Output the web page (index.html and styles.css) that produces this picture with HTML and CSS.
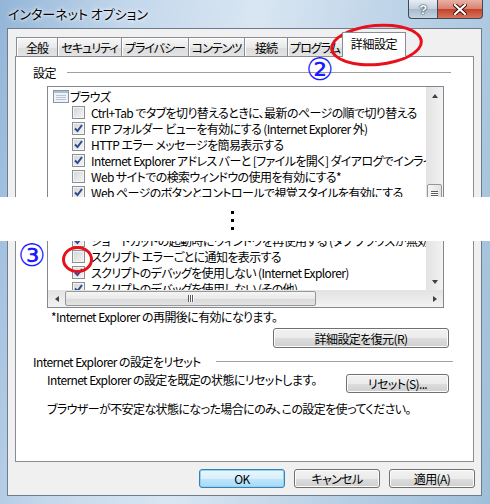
FILE: index.html
```html
<!DOCTYPE html>
<html lang="ja">
<head>
    <meta charset="UTF-8">
    <title>インターネット オプション</title>
    <link rel="stylesheet" href="styles.css">
</head>
<body>
    <div class="window">
        <div class="titlebar">
            <div class="title">インターネット オプション</div>
            <div class="caption">
                <div class="cap-btn help">?</div>
                <div class="cap-btn close">
                    <svg width="14" height="11" viewBox="0 0 14 11"><path d="M2 1 L12 10 M12 1 L2 10" stroke="#3a0c06" stroke-width="4" stroke-linecap="square"/><path d="M2 1 L12 10 M12 1 L2 10" stroke="#fff" stroke-width="2.2" stroke-linecap="square"/></svg>
                </div>
            </div>
        </div>

        <div class="client">
            <div class="tabs">
                <div class="tab" style="width:42px">全般</div>
                <div class="tab" style="width:64px">セキュリティ</div>
                <div class="tab" style="width:67px">プライバシー</div>
                <div class="tab" style="width:56px">コンテンツ</div>
                <div class="tab" style="width:43px">接続</div>
                <div class="tab" style="width:55px">プログラム</div>
                <div class="tab active" style="width:64px">詳細設定</div>
            </div>

            <div class="panel">
                <div class="group-head head-settings">
                    <span>設定</span>
                    <div class="group-line"></div>
                </div>

                <div class="list">
                    <div class="items">
                        <div class="row cat">
                            <svg class="cat-icon" width="16" height="13" viewBox="0 0 16 13"><rect x="0.5" y="0.5" width="15" height="12" fill="#eef2f7" stroke="#8797a8"/><rect x="1" y="1" width="14" height="2" fill="#a9bfd6"/><path d="M3 5.5h10M3 7.5h10M3 9.5h10" stroke="#b9c5d2"/></svg>
                            <span>ブラウズ</span>
                        </div>
                        <div class="row opt"><span class="chk"></span><span>Ctrl+Tab でタブを切り替えるときに、最新のページの順で切り替える</span></div>
                        <div class="row opt"><span class="chk on"><svg width="11" height="11" viewBox="0 0 11 11"><path d="M2 5.5 L4.5 8 L9 2" fill="none" stroke="#2c4a8e" stroke-width="2"/></svg></span><span>FTP フォルダー ビューを有効にする (Internet Explorer 外)</span></div>
                        <div class="row opt"><span class="chk on"><svg width="11" height="11" viewBox="0 0 11 11"><path d="M2 5.5 L4.5 8 L9 2" fill="none" stroke="#2c4a8e" stroke-width="2"/></svg></span><span>HTTP エラー メッセージを簡易表示する</span></div>
                        <div class="row opt"><span class="chk on"><svg width="11" height="11" viewBox="0 0 11 11"><path d="M2 5.5 L4.5 8 L9 2" fill="none" stroke="#2c4a8e" stroke-width="2"/></svg></span><span>Internet Explorer アドレス バーと [ファイルを開く] ダイアログでインライン オートコンプリートを使用する</span></div>
                        <div class="row opt"><span class="chk"></span><span>Web サイトでの検索ウィンドウの使用を有効にする*</span></div>
                        <div class="row opt"><span class="chk on"><svg width="11" height="11" viewBox="0 0 11 11"><path d="M2 5.5 L4.5 8 L9 2" fill="none" stroke="#2c4a8e" stroke-width="2"/></svg></span><span>Web ページのボタンとコントロールで視覚スタイルを有効にする</span></div>
                        <div class="row opt"><span class="chk on"><svg width="11" height="11" viewBox="0 0 11 11"><path d="M2 5.5 L4.5 8 L9 2" fill="none" stroke="#2c4a8e" stroke-width="2"/></svg></span><span>サード パーティ製のブラウザー拡張を有効にする*</span></div>
                        <div class="row opt"><span class="chk"></span><span>ページ切り替え効果を有効にする</span></div>
                        <div class="row opt"><span class="chk on"><svg width="11" height="11" viewBox="0 0 11 11"><path d="M2 5.5 L4.5 8 L9 2" fill="none" stroke="#2c4a8e" stroke-width="2"/></svg></span><span>ショートカットの起動時にウィンドウを再使用する (タブ ブラウズが無効なとき)</span></div>
                        <div class="row opt"><span class="chk"></span><span>スクリプト エラーごとに通知を表示する</span></div>
                        <div class="row opt"><span class="chk on"><svg width="11" height="11" viewBox="0 0 11 11"><path d="M2 5.5 L4.5 8 L9 2" fill="none" stroke="#2c4a8e" stroke-width="2"/></svg></span><span>スクリプトのデバッグを使用しない (Internet Explorer)</span></div>
                        <div class="row opt"><span class="chk on"><svg width="11" height="11" viewBox="0 0 11 11"><path d="M2 5.5 L4.5 8 L9 2" fill="none" stroke="#2c4a8e" stroke-width="2"/></svg></span><span>スクリプトのデバッグを使用しない (その他)</span></div>
                    </div>
                    <div class="vscroll">
                        <div class="arrow"><span class="tri up"></span></div>
                        <div class="vtrack">
                            <div class="vthumb"><span class="grip-h"></span></div>
                        </div>
                        <div class="arrow"><span class="tri down"></span></div>
                    </div>
                    <div class="hscroll">
                        <div class="arrow"><span class="tri left"></span></div>
                        <div class="htrack">
                            <div class="hthumb"><span class="grip-v"></span></div>
                        </div>
                        <div class="arrow"><span class="tri right"></span></div>
                    </div>
                </div>

                <div class="note">*Internet Explorer の再開後に有効になります。</div>
                <div class="restore-row">
                    <button class="btn restore">詳細設定を復元(R)</button>
                </div>

                <div class="group-head head-reset">
                    <span>Internet Explorer の設定をリセット</span>
                    <div class="group-line"></div>
                </div>
                <div class="reset-row">
                    <span>Internet Explorer の設定を既定の状態にリセットします。</span>
                    <button class="btn reset">リセット(S)...</button>
                </div>
                <div class="warn">ブラウザーが不安定な状態になった場合にのみ、この設定を使ってください。</div>
            </div>

            <div class="dialog-buttons">
                <button class="btn default">OK</button>
                <button class="btn">キャンセル</button>
                <button class="btn">適用(A)</button>
            </div>
        </div>
    </div>

    <!-- 切り取り線と注釈 -->
    <div class="cut">
        <span class="dot"></span>
        <span class="dot"></span>
        <span class="dot"></span>
    </div>
    <div class="mark ring-tab"></div>
    <div class="mark ring-check"></div>
    <div class="mark num num2">②</div>
    <div class="mark num num3">③</div>
</body>
</html>
```

FILE: styles.css
```css
body {
    margin: 0;
    width: 490px;
    height: 504px;
    position: relative;
    overflow: hidden;
    background: #fff;
    font-family: "Noto Sans CJK JP", "Liberation Sans", sans-serif;
    font-size: 12px;
    letter-spacing: -0.6px;
    font-feature-settings: "palt";
    color: #000;
}

.window {
    width: 490px;
    height: 504px;
    box-sizing: border-box;
    display: flex;
    flex-direction: column;
    padding-bottom: 8px;
    background: linear-gradient(100deg, #93b5d8 0%, #c3d7eb 22%, #d9e6f2 45%, #bcd2e7 70%, #9fbfd9 100%);
}

.titlebar {
    height: 28px;
    display: flex;
    justify-content: space-between;
    align-items: flex-start;
    padding-left: 8px;
}

.title {
    line-height: 28px;
    font-size: 13px;
    letter-spacing: 0;
    text-shadow: 0 0 6px #fff, 0 0 3px #fff;
}

.caption {
    display: flex;
    margin-right: 7px;
}

.cap-btn {
    height: 19px;
    box-sizing: border-box;
    display: flex;
    justify-content: center;
    align-items: center;
    border: 1px solid #3f4a58;
    border-top: none;
}

.help {
    width: 29px;
    border-radius: 0 0 0 4px;
    border-right: none;
    background: linear-gradient(#e6edf4, #c3d0dd 50%, #a9b9ca 51%, #c5d4e3);
    color: #fff;
    font-family: "Liberation Sans", sans-serif;
    font-weight: bold;
    font-size: 13px;
    text-shadow: 0 0 2px #1e2a38, 0 0 1px #1e2a38;
}

.close {
    width: 46px;
    border-radius: 0 0 4px 0;
    background: linear-gradient(#eab1a5, #d8806e 50%, #c2412b 51%, #d9735c);
}

.client {
    flex: 1;
    margin: 0 8px 0 7px;
    border: 1px solid #6e7d8e;
    background: #f0f0f0;
    display: flex;
    flex-direction: column;
}

.tabs {
    height: 28px;
    display: flex;
    align-items: flex-end;
    padding-left: 8px;
    margin-bottom: -1px;
    letter-spacing: -1px;
}

.tab {
    height: 20px;
    box-sizing: border-box;
    border: 1px solid #898c95;
    border-bottom: none;
    border-left: none;
    background: linear-gradient(#f7f7f7, #e9e9e9 50%, #dcdcdc 51%, #e4e4e4);
    text-align: center;
    white-space: nowrap;
    line-height: 19px;
    box-shadow: inset 1px 1px 0 #fff;
}

.tab:first-child {
    border-left: 1px solid #898c95;
}

.tab.active {
    height: 25px;
    margin-left: -1px;
    border-left: 1px solid #898c95;
    background: #fff;
    box-shadow: none;
    line-height: 22px;
    letter-spacing: -0.4px;
    position: relative;
    z-index: 1;
}

.panel {
    height: 406px;
    box-sizing: border-box;
    margin: 0 7px;
    border: 1px solid #898c95;
    background: #fff;
}

.group-head {
    display: flex;
    align-items: center;
    height: 14px;
    padding-left: 17px;
}

.group-line {
    flex: 1;
    height: 0;
    border-top: 1px solid #a0a0a0;
    margin-left: 11px;
}

.head-settings {
    margin-top: 8px;
    margin-right: 22px;
}

.head-reset {
    margin-top: 6px;
    margin-right: 20px;
}

.head-reset .group-line {
    margin-left: 15px;
}

.list {
    margin: 7px 0 0 31px;
    width: 397px;
    height: 222px;
    box-sizing: border-box;
    border: 1px solid #828790;
    display: grid;
    grid-template-columns: 1fr 17px;
    grid-template-rows: 1fr 17px;
}

.items {
    overflow: hidden;
    padding-top: 1px;
}

.row {
    height: 16px;
    display: flex;
    align-items: center;
    white-space: nowrap;
}

.row.cat {
    padding-left: 5px;
}

.cat-icon {
    margin-right: 1px;
    flex: none;
}

.row.opt {
    padding-left: 24px;
}

.chk {
    flex: none;
    width: 13px;
    height: 13px;
    box-sizing: border-box;
    margin-right: 6px;
    border: 1px solid #8e8f8f;
    background: linear-gradient(135deg, #d2d4d7, #f6f6f6);
    box-shadow: inset 0 0 0 1px #f4f4f4;
    display: flex;
    justify-content: center;
    align-items: center;
}

.vscroll {
    display: flex;
    flex-direction: column;
    background: linear-gradient(to right, #e3e3e3, #f2f2f2);
}

.hscroll {
    grid-column: 1 / 3;
    display: flex;
    background: linear-gradient(#e3e3e3, #f2f2f2);
}

.arrow {
    width: 17px;
    height: 17px;
    flex: none;
    display: flex;
    justify-content: center;
    align-items: center;
}

.tri {
    width: 0;
    height: 0;
    border: 3px solid transparent;
}

.tri.up { border-bottom: 4px solid #404040; border-top: none; }
.tri.down { border-top: 4px solid #404040; border-bottom: none; }
.tri.left { border-right: 4px solid #404040; border-left: none; }
.tri.right { border-left: 4px solid #404040; border-right: none; }

.vtrack {
    flex: 1;
}

.vthumb {
    margin: 80px 1px 0 1px;
    height: 20px;
    box-sizing: border-box;
    border: 1px solid #979797;
    border-radius: 2px;
    background: linear-gradient(to right, #f5f5f5, #e2e2e2);
    display: flex;
    justify-content: center;
    align-items: center;
}

.grip-h {
    width: 7px;
    height: 6px;
    background: repeating-linear-gradient(#5a5a5a 0 1px, #fff 1px 2px);
}

.htrack {
    flex: 1;
}

.hthumb {
    margin: 1px 0 0 0;
    width: 251px;
    height: 15px;
    box-sizing: border-box;
    border: 1px solid #979797;
    border-radius: 2px;
    background: linear-gradient(#f5f5f5, #e9e9e9 50%, #d9d9d9 51%, #e3e3e3);
    display: flex;
    justify-content: center;
    align-items: center;
}

.grip-v {
    width: 6px;
    height: 7px;
    background: repeating-linear-gradient(to right, #5a5a5a 0 1px, #fff 1px 2px);
}

.note {
    margin: 1px 0 0 35px;
    line-height: 16px;
}

.restore-row {
    display: flex;
    justify-content: flex-end;
    margin-top: 3px;
    padding-right: 24px;
}

.btn {
    height: 19px;
    box-sizing: border-box;
    padding: 0;
    border: 1px solid #707070;
    border-radius: 3px;
    background: linear-gradient(#f2f2f2, #ebebeb 50%, #dddddd 51%, #cfcfcf);
    box-shadow: inset 0 0 0 1px #fcfcfc;
    font: inherit;
    letter-spacing: inherit;
    color: #000;
    line-height: 17px;
}

.restore {
    width: 176px;
    height: 20px;
}

.reset-row {
    display: flex;
    align-items: flex-start;
    margin-top: 5px;
    padding-left: 31px;
    padding-right: 24px;
    line-height: 14px;
}

.reset {
    margin-left: auto;
    margin-top: 1px;
    width: 103px;
}

.warn {
    margin: 9px 0 0 31px;
    line-height: 14px;
}

.dialog-buttons {
    display: flex;
    justify-content: flex-end;
    gap: 9px;
    margin-top: 7px;
    padding-right: 6px;
}

.dialog-buttons .btn {
    width: 86px;
}

.btn.default {
    border-color: #3c7fb1;
    background: linear-gradient(#eaf6fd, #d9f0fc 50%, #bee6fd 51%, #a7d9f5);
    box-shadow: inset 0 0 0 1px #8fd3f5;
}

/* 切り取り部分 */
.cut {
    position: absolute;
    left: 0;
    top: 197px;
    width: 490px;
    height: 44px;
    box-sizing: border-box;
    background: #fff;
    padding: 14px 0 0 231px;
    display: flex;
    flex-direction: column;
    gap: 5px;
}

.dot {
    width: 3px;
    height: 3px;
    background: #000;
}

.mark {
    position: absolute;
}

.ring-tab {
    left: 330px;
    top: 24px;
    width: 87px;
    height: 36px;
    border: 3px solid #e8101a;
    border-radius: 50%;
    transform: rotate(-5deg);
}

.ring-check {
    left: 62px;
    top: 246px;
    width: 25px;
    height: 21px;
    border: 3px solid #e8101a;
    border-radius: 50%;
}

.num {
    font-family: "DejaVu Sans", sans-serif;
    letter-spacing: 0;
    color: #1a1aff;
    font-size: 31px;
    line-height: 31px;
}

.num2 {
    left: 306px;
    top: 54px;
}

.num3 {
    left: 18px;
    top: 240px;
}
```
